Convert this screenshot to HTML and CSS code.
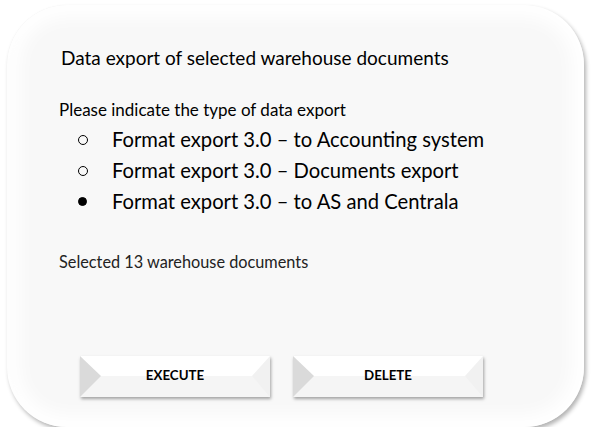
FILE: index.html
```html
<!DOCTYPE html>
<html lang="en">
<head>
    <meta charset="UTF-8">
    <meta name="viewport" content="width=device-width, initial-scale=1.0">
    <title>Data export</title>
    <link rel="stylesheet" href="styles.css">
</head>
<body>
    <div class="card">
        <h1 class="title">Data export of selected warehouse documents</h1>
        <p class="prompt">Please indicate the type of data export</p>
        <ul class="options">
            <li><span class="mark"></span>Format export 3.0 – to Accounting system</li>
            <li><span class="mark"></span>Format export 3.0 – Documents export</li>
            <li class="selected"><span class="mark"></span>Format export 3.0 – to AS and Centrala</li>
        </ul>
        <p class="status">Selected 13 warehouse documents</p>
        <div class="buttons">
            <div class="btn"><span>EXECUTE</span></div>
            <div class="btn"><span>DELETE</span></div>
        </div>
    </div>
</body>
</html>
```

FILE: styles.css
```css
body {
    margin: 0;
    background: #ffffff;
    font-family: Lato, "Open Sans", sans-serif;
    color: #000;
}
.card {
    margin: 5px 0 0 7px;
    width: 577px;
    height: 422px;
    box-sizing: border-box;
    padding: 41px 0 0 52px;
    border-radius: 60px;
    background: #f8f8f8;
    box-shadow:
        inset 0 0 18px 12px #ffffff,
        inset 3px 0 5px rgba(0, 0, 0, 0.06),
        2px 3px 4px rgba(0, 0, 0, 0.3);
}
.title {
    margin: 0 0 0 2px;
    font-size: 19px;
    font-weight: normal;
    line-height: 24px;
}
.prompt {
    margin: 30px 0 0;
    font-size: 17px;
    line-height: 20px;
}
.options {
    list-style: none;
    margin: 4px 0 0;
    padding: 0;
    font-size: 20.2px;
    line-height: 31px;
}
.options li {
    display: flex;
    align-items: center;
}
.mark {
    width: 10px;
    height: 10px;
    box-sizing: border-box;
    border: 1px solid #000;
    border-radius: 50%;
    margin: 0 24px 0 19px;
}
.selected .mark {
    width: 9px;
    height: 9px;
    margin-right: 25px;
    background: #000;
}
.status {
    margin: 35px 0 0;
    font-size: 16.3px;
    line-height: 20px;
    color: #222;
}
.buttons {
    display: flex;
    gap: 23px;
    margin: 84px 0 0 21px;
}
.btn {
    position: relative;
    width: 190px;
    height: 41px;
    box-sizing: border-box;
    padding-bottom: 3px;
    display: flex;
    align-items: center;
    justify-content: center;
    font-weight: bold;
    font-size: 13.3px;
    box-shadow: 1px 2px 3px rgba(0, 0, 0, 0.35);
}
.btn::before {
    content: "";
    position: absolute;
    inset: 0;
    border-style: solid;
    border-width: 20px 18px 21px 21px;
    border-color: #ffffff #f1f1f1 #f5f5f5 #dadada;
}
.btn span {
    position: relative;
}
```
